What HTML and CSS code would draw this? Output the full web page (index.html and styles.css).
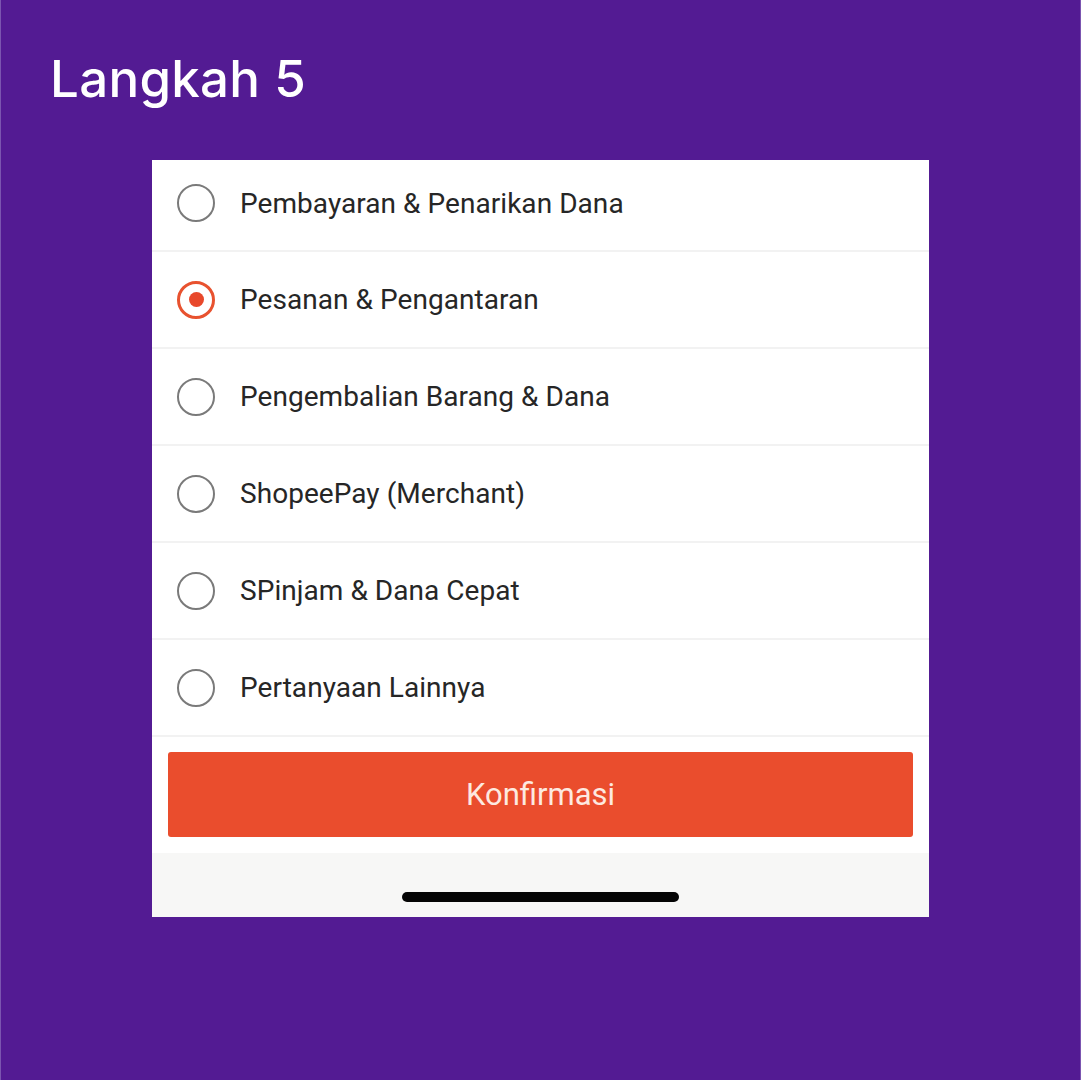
FILE: index.html
```html
<!DOCTYPE html>
<html lang="id">
<head>
<meta charset="utf-8">
<title>Langkah 5</title>
<link rel="stylesheet" href="styles.css">
</head>
<body>
<main class="page">
  <h1 class="title">Langkah 5</h1>
  <section class="card">
    <ul class="options">
      <li class="option option-first"><span class="radio"></span><span class="label">Pembayaran &amp; Penarikan Dana</span></li>
      <li class="option"><span class="radio radio-on"></span><span class="label">Pesanan &amp; Pengantaran</span></li>
      <li class="option"><span class="radio"></span><span class="label">Pengembalian Barang &amp; Dana</span></li>
      <li class="option"><span class="radio"></span><span class="label">ShopeePay (Merchant)</span></li>
      <li class="option"><span class="radio"></span><span class="label">SPinjam &amp; Dana Cepat</span></li>
      <li class="option"><span class="radio"></span><span class="label">Pertanyaan Lainnya</span></li>
    </ul>
    <div class="actions">
      <button class="confirm" type="button">Konfirmasi</button>
    </div>
    <div class="home-bar"><span class="home-indicator"></span></div>
  </section>
</main>
</body>
</html>
```

FILE: styles.css
```css
html, body {
  margin: 0;
  padding: 0;
}
body {
  background: #531b93;
  width: 1081px;
  height: 1080px;
  overflow: hidden;
  font-family: Roboto, "Noto Sans", sans-serif;
}
.page {
  height: 1080px;
  box-sizing: border-box;
  border-left: 1px solid #7b55b0;
  border-right: 1px solid #7b55b0;
}
.title {
  margin: 0;
  padding: 48px 0 0 49px;
  height: 160px;
  box-sizing: border-box;
  font-family: Inter, "Open Sans", sans-serif;
  font-weight: 500;
  font-size: 51px;
  line-height: 62px;
  color: #ffffff;
  letter-spacing: 0.3px;
}
.card {
  margin-left: 151px;
  width: 777px;
  background: #ffffff;
}
.options {
  list-style: none;
  margin: 0;
  padding: 0;
}
.option {
  display: flex;
  align-items: center;
  height: 95px;
  border-bottom: 2px solid #f2f2f2;
  padding-left: 25px;
}
.option-first {
  height: 92px;
  padding-bottom: 4px;
  box-sizing: border-box;
}
.radio {
  width: 34px;
  height: 34px;
  border: 2px solid #7a7a7a;
  border-radius: 50%;
  flex: none;
  display: flex;
  align-items: center;
  justify-content: center;
}
.radio-on {
  border: 3px solid #e8522f;
  width: 32px;
  height: 32px;
}
.radio-on::after {
  content: "";
  width: 15px;
  height: 15px;
  border-radius: 50%;
  background: #e8482b;
}
.label {
  margin-left: 25px;
  font-size: 28px;
  color: #262626;
  letter-spacing: 0.05px;
}
.actions {
  padding: 15px 16px 16px 16px;
}
.confirm {
  display: block;
  width: 100%;
  height: 85px;
  border: none;
  border-radius: 3px;
  background: #ea4d2d;
  color: #fde9e0;
  font-family: Roboto, "Noto Sans", sans-serif;
  font-size: 31px;
  padding: 0;
}
.home-bar {
  background: #f7f7f6;
  height: 64px;
  display: flex;
  justify-content: center;
  padding-top: 39px;
  box-sizing: border-box;
}
.home-indicator {
  width: 277px;
  height: 10px;
  border-radius: 5px;
  background: #050505;
}
```
